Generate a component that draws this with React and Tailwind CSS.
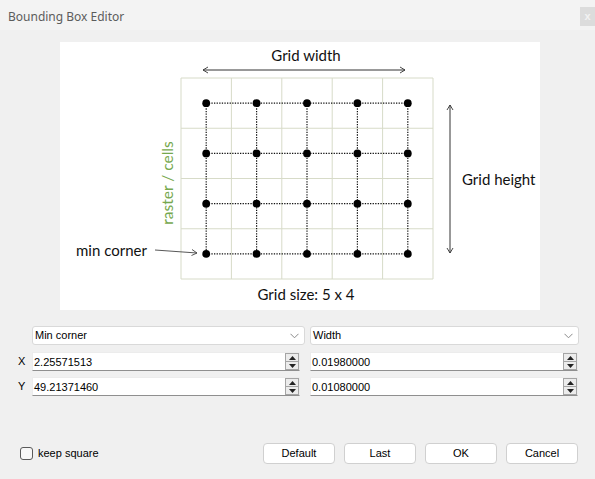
import React from 'react';

const gridX = 121;
const gridY = 36;
const cellW = 50.4;
const cellH = 50.25;

const Diagram = () => {
    const cols = [0, 1, 2, 3, 4].map((i) => gridX + cellW / 2 + i * cellW);
    const rows = [0, 1, 2, 3].map((j) => gridY + cellH / 2 + j * cellH);
    const font = { fontFamily: 'Lato, "Open Sans", sans-serif' };

    return (
        <svg width="480" height="268" viewBox="0 0 480 268" style={font}>
            {/* raster */}
            {[0, 1, 2, 3, 4, 5].map((i) => (
                <line key={'v' + i} x1={gridX + i * cellW} y1={gridY} x2={gridX + i * cellW} y2={gridY + 4 * cellH} stroke="#d7dbc8" strokeWidth="1" />
            ))}
            {[0, 1, 2, 3, 4].map((j) => (
                <line key={'h' + j} x1={gridX} y1={gridY + j * cellH} x2={gridX + 5 * cellW} y2={gridY + j * cellH} stroke="#d7dbc8" strokeWidth="1" />
            ))}

            {/* dotted connections */}
            {rows.map((y, j) => (
                <line key={'dr' + j} x1={cols[0]} y1={y} x2={cols[4]} y2={y} stroke="#111" strokeWidth="1.2" strokeDasharray="1.3 1.3" />
            ))}
            {cols.map((x, i) => (
                <line key={'dc' + i} x1={x} y1={rows[0]} x2={x} y2={rows[3]} stroke="#111" strokeWidth="1.2" strokeDasharray="1.3 1.3" />
            ))}
            {rows.map((y, j) => cols.map((x, i) => (
                <circle key={`p${i}-${j}`} cx={x} cy={y} r="3.9" fill="#000" />
            )))}

            {/* grid width arrow */}
            <line x1="143" y1="28" x2="345" y2="28" stroke="#333" strokeWidth="1" />
            <polyline points="148,25 143,28 148,31" fill="none" stroke="#333" strokeWidth="0.9" />
            <polyline points="340,25 345,28 340,31" fill="none" stroke="#333" strokeWidth="0.9" />
            <text x="246" y="19" fontSize="15" textAnchor="middle" fill="#111">Grid width</text>

            {/* grid height arrow */}
            <line x1="390" y1="63" x2="390" y2="211" stroke="#333" strokeWidth="1" />
            <polyline points="387,68 390,63 393,68" fill="none" stroke="#333" strokeWidth="0.9" />
            <polyline points="387,206 390,211 393,206" fill="none" stroke="#333" strokeWidth="0.9" />
            <text x="402" y="143" fontSize="15" fill="#111">Grid height</text>

            {/* raster label */}
            <text x="113" y="141" fontSize="15.5" fill="#76a84e" textAnchor="middle" transform="rotate(-90 113 141)">raster / cells</text>

            {/* min corner */}
            <text x="16" y="214" fontSize="15" fill="#111">min corner</text>
            <line x1="95" y1="208" x2="137" y2="211" stroke="#444" strokeWidth="0.9" />
            <polyline points="132,207.5 137,211 131.5,213.5" fill="none" stroke="#444" strokeWidth="0.9" />

            <text x="246" y="258" fontSize="15" textAnchor="middle" fill="#111">Grid size: 5 x 4</text>
        </svg>
    );
};

const Combo = ({ label, width }) => (
    <div className={`${width} h-[19px] bg-white border border-[#d9d9d9] rounded-[3px] flex items-center justify-between pl-[2px] pr-[5px]`}>
        <span className="text-[11px] text-black leading-none">{label}</span>
        <svg width="9" height="6" viewBox="0 0 9 6">
            <polyline points="0.5,0.8 4.5,4.8 8.5,0.8" fill="none" stroke="#8a8a8a" strokeWidth="1" />
        </svg>
    </div>
);

const Spin = ({ value, width }) => (
    <div className={`${width} h-[19px] bg-white border border-[#ececec] border-b-[#8f8f8f] flex items-center`}>
        <span className="flex-1 pl-[1px] pt-[1px] text-[11px] text-black leading-none">{value}</span>
        <div className="w-[14px] h-[17px] border border-[#a5a5a5] bg-[#ececec] flex flex-col">
            <div className="flex-1 flex items-center justify-center border-b border-[#a5a5a5]">
                <svg width="7" height="4" viewBox="0 0 7 4"><polygon points="0,4 3.5,0 7,4" fill="#222" /></svg>
            </div>
            <div className="flex-1 flex items-center justify-center">
                <svg width="7" height="4" viewBox="0 0 7 4"><polygon points="0,0 3.5,4 7,0" fill="#222" /></svg>
            </div>
        </div>
    </div>
);

const Btn = ({ children }) => (
    <button className="w-[72px] h-[21px] bg-white border border-[#d0d0d0] rounded-[4px] text-[11px] text-black leading-none">
        {children}
    </button>
);

const App = () => {
    return (
        <div className="w-[595px] h-[479px] bg-[#f0f0f0] flex flex-col overflow-hidden" style={{ fontFamily: '"Liberation Sans", Arial, sans-serif' }}>
            {/* title bar */}
            <div className="h-[30px] bg-[#f3f3f3] flex items-start justify-between">
                <span className="mt-[8px] ml-[8px] text-[12px] text-[#5c5c5c]" style={{ fontFamily: '"Noto Sans", "Open Sans", sans-serif' }}>Bounding Box Editor</span>
                <div className="mt-[7px] w-[15px] h-[19px] bg-[#dcdcdc] flex items-center justify-center text-[11px] text-[#f2f2f2] font-bold">x</div>
            </div>

            {/* picture */}
            <div className="mt-[12px] ml-[60px] w-[480px] h-[268px] bg-white">
                <Diagram />
            </div>

            {/* fields */}
            <div className="mt-[16px] flex flex-col">
                <div className="flex pl-[32px] gap-[5px]">
                    <Combo label="Min corner" width="w-[273px]" />
                    <Combo label="Width" width="w-[269px]" />
                </div>
                <div className="mt-[7px] flex items-center">
                    <span className="w-[32px] pl-[18px] text-[11px] text-black">X</span>
                    <Spin value="2.25571513" width="w-[268px]" />
                    <div className="w-[10px]" />
                    <Spin value="0.01980000" width="w-[268px]" />
                </div>
                <div className="mt-[6px] flex items-center">
                    <span className="w-[32px] pl-[18px] text-[11px] text-black">Y</span>
                    <Spin value="49.21371460" width="w-[268px]" />
                    <div className="w-[10px]" />
                    <Spin value="0.01080000" width="w-[268px]" />
                </div>
            </div>

            {/* bottom row */}
            <div className="mt-[47px] flex items-center pl-[20px] pr-[17px]">
                <div className="w-[13px] h-[13px] border border-[#5a5a5a] rounded-[3px] bg-[#f7f7f7]" />
                <span className="ml-[5px] text-[11px] text-black">keep square</span>
                <div className="ml-auto flex gap-[9px]">
                    <Btn>Default</Btn>
                    <Btn>Last</Btn>
                    <Btn>OK</Btn>
                    <Btn>Cancel</Btn>
                </div>
            </div>
        </div>
    );
};

export default App;
